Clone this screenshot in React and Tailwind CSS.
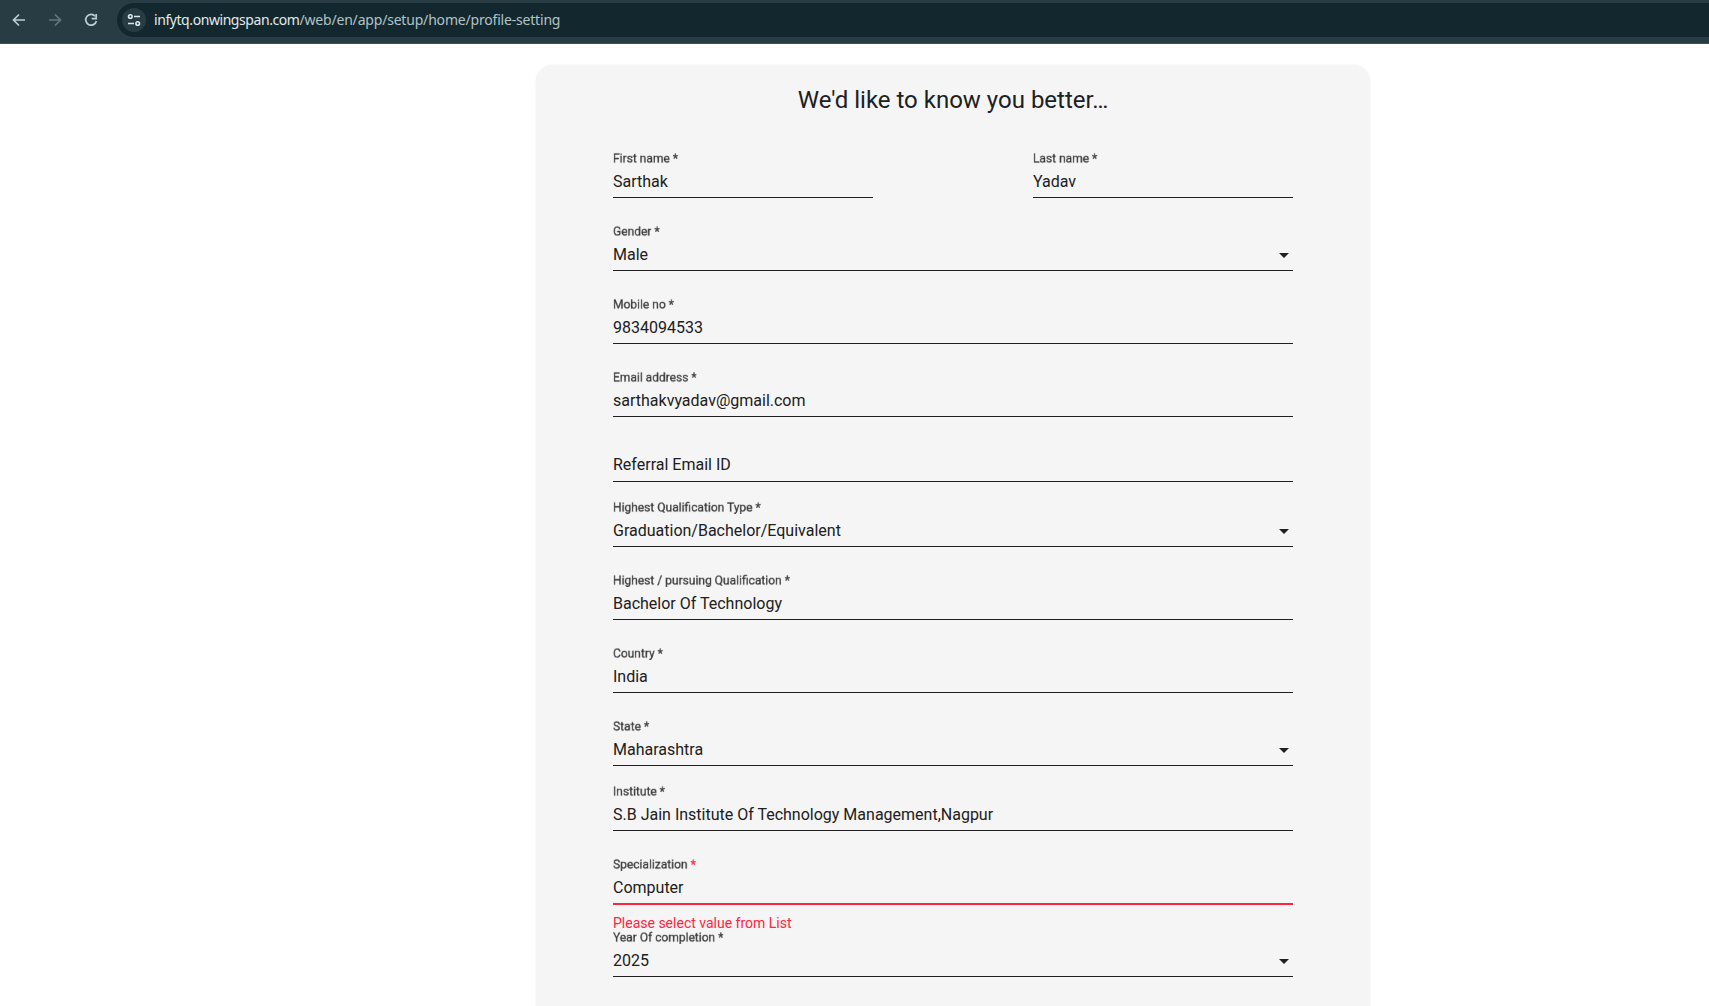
const WIDTHS = { full: 'w-full', half: 'w-[260px]' };

function Field({ label, value, placeholder, size = 'full', compact, select, error }) {
  return (
    <div className={`relative flex shrink-0 flex-col justify-end ${compact ? 'h-[65px]' : 'h-[73px]'} ${WIDTHS[size]}`}>
      {label && (
        <div className="mb-2 h-[13.5px]">
          <div className="h-[17px] w-[133.3333%] origin-top-left scale-75 overflow-hidden whitespace-nowrap leading-[18px] text-[#202020]/85 will-change-transform [-webkit-text-stroke:0.35px]">
            {label} <span className={error ? 'text-[#ff2440]' : ''}>*</span>
          </div>
        </div>
      )}
      <div className={`flex h-[18px] items-center justify-between leading-[18px] ${placeholder ? 'mb-[7px]' : 'mb-1.5'}`}>
        <span className="whitespace-nowrap">{value || placeholder}</span>
        {select && (
          <span className="mr-1 mt-px h-0 w-0 border-x-[5px] border-t-[5px] border-x-transparent border-t-[#202020]" />
        )}
      </div>
      <div className={error ? '-mb-px h-0.5 shrink-0 bg-[#ff2440]' : 'h-px shrink-0 bg-[#202020]'} />
      {error && (
        <div className="absolute left-0 top-full mt-[11px] whitespace-nowrap text-sm leading-4 text-[#ff2440]">{error}</div>
      )}
    </div>
  );
}

function Toolbar() {
  return (
    <header className="flex h-11 items-start border-b border-[#3d5056] bg-[#283d43] pt-[3px]">
      <div className="flex h-[34px] w-[117px] shrink-0 items-center pl-[11px]">
        <svg width="16" height="16" viewBox="0 0 16 16" fill="none" stroke="#b9cdd3" strokeWidth="1.7">
          <path d="M14 8H3M8 2.5 2.5 8 8 13.5" />
        </svg>
        <svg className="ml-5" width="16" height="16" viewBox="0 0 16 16" fill="none" stroke="#66777c" strokeWidth="1.7">
          <path d="M2 8h11M8 2.5 13.5 8 8 13.5" />
        </svg>
        <svg className="ml-5" width="16" height="16" viewBox="0 0 16 16" fill="none" stroke="#b9cdd3" strokeWidth="1.7">
          <path d="M12.2 4.2A5.4 5.4 0 1 0 13.4 9" />
          <path d="M13.2 2v4.6H8.6" />
        </svg>
      </div>
      <div className="flex h-[34px] flex-1 items-center rounded-l-full bg-[#12282e] pl-[5px]">
        <span className="flex h-6 w-6 items-center justify-center rounded-full bg-[#283d43]">
          <svg width="14" height="14" viewBox="0 0 14 14" fill="none" stroke="#dbe6e9" strokeWidth="1.6">
            <circle cx="3.3" cy="3.5" r="1.8" />
            <path d="M7 3.5h6M1 10.5h6" />
            <circle cx="10.7" cy="10.5" r="1.8" />
          </svg>
        </span>
        <span className="ml-2 whitespace-nowrap font-['Noto_Sans',sans-serif] text-[14px] leading-5 tracking-[-0.19px] text-[#b3c2c6]">
          <span className="tracking-[-0.43px] text-[#e1eaec]">infytq.onwingspan.com</span>/web/en/app/setup/home/profile-setting
        </span>
      </div>
    </header>
  );
}

export default function App() {
  return (
    <div className="h-[1006px] overflow-hidden bg-white font-[Roboto,sans-serif] text-base text-[#202020]">
      <Toolbar />
      <main className="ml-[536px] mt-[21px] flex h-[1000px] w-[834px] flex-col rounded-[17px] bg-[#f5f5f5] px-[77px] shadow-[0_0_2px_rgba(0,0,0,0.08)]">
        <h1 className="mt-[19px] h-8 text-center text-2xl font-normal leading-8">We'd like to know you better…</h1>
        <div className="mt-[9px] flex justify-between">
          <Field size="half" label="First name" value="Sarthak" />
          <Field size="half" label="Last name" value="Yadav" />
        </div>
        <Field label="Gender" value="Male" select />
        <Field label="Mobile no" value="9834094533" />
        <Field label="Email address" value="sarthakvyadav@gmail.com" />
        <Field placeholder="Referral Email ID" compact />
        <Field label="Highest Qualification Type" value="Graduation/Bachelor/Equivalent" compact select />
        <Field label="Highest / pursuing Qualification" value="Bachelor Of Technology" />
        <Field label="Country" value="India" />
        <Field label="State" value="Maharashtra" select />
        <Field label="Institute" value="S.B Jain Institute Of Technology Management,Nagpur" compact />
        <Field label="Specialization" value="Computer" error="Please select value from List" />
        <Field label="Year Of completion" value="2025" select />
      </main>
    </div>
  );
}
